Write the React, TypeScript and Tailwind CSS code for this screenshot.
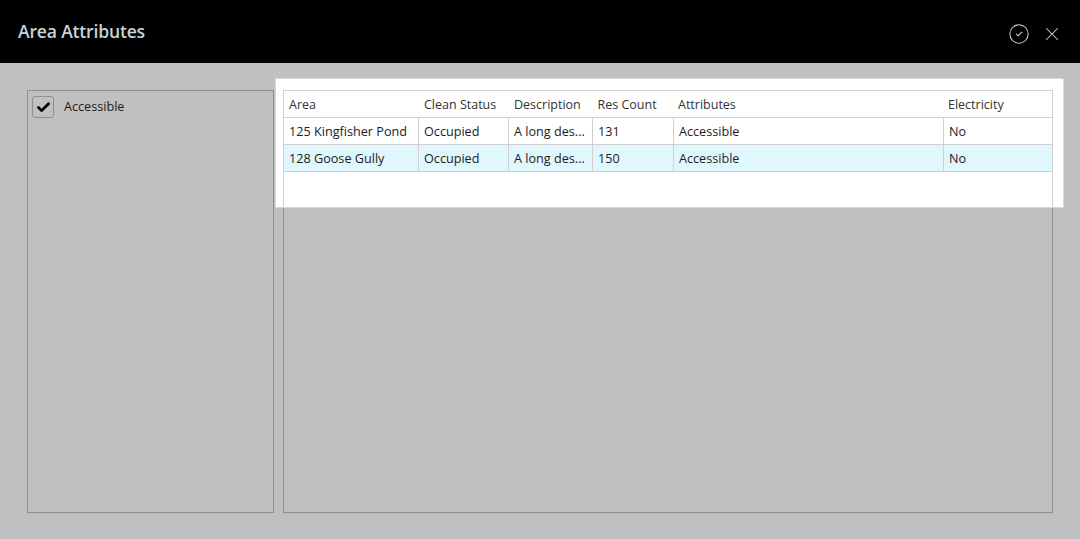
import { Check, CircleCheck, X } from "lucide-react";

const columns = [
  { label: "Area", width: "w-[135px]", headWidth: "w-[135px]" },
  { label: "Clean Status", width: "w-[90px]", headWidth: "w-[90px]" },
  { label: "Description", width: "w-[84px]", headWidth: "w-[83.5px]" },
  { label: "Res Count", width: "w-[81px]", headWidth: "w-[80.5px]" },
  { label: "Attributes", width: "w-[270px]", headWidth: "w-[270px]" },
  { label: "Electricity", width: "flex-1", headWidth: "flex-1" },
];

const rows = [
  { cells: ["125 Kingfisher Pond", "Occupied", "A long des...", "131", "Accessible", "No"], selected: false },
  { cells: ["128 Goose Gully", "Occupied", "A long des...", "150", "Accessible", "No"], selected: true },
];

export default function App() {
  return (
    <div className="flex h-[539px] w-[1080px] flex-col overflow-hidden bg-[#c0c0c0] font-['Open_Sans',sans-serif] text-[12.65px] text-[#1c1c1c]">
      {/* Header */}
      <header className="flex h-[63px] shrink-0 items-center justify-between bg-black pl-[18px] pr-[17px]">
        <h1 className="text-[17.6px] font-semibold tracking-[-0.2px] text-[#c9d3da]">Area Attributes</h1>
        <div className="mt-[5px] flex items-center gap-[11px] text-[#c5d8e6]">
          <CircleCheck className="h-[22px] w-[22px]" strokeWidth={1.1} />
          <X className="h-[22px] w-[22px]" strokeWidth={1.1} />
        </div>
      </header>

      <main className="flex flex-1 gap-[9px] pb-[26px] pl-[27px] pr-[27px] pt-[27px]">
        {/* Attribute list */}
        <aside className="w-[247px] shrink-0 border border-[#8f8f8f] px-1 py-[5px]">
          <label className="flex items-center gap-[10px]">
            <span className="flex h-[22px] w-[22px] items-center justify-center rounded-[3px] border border-[#8f8f8f] pt-px">
              <Check className="h-[15px] w-[15px] text-black" strokeWidth={4.5} />
            </span>
            <span className="mb-[2px]">Accessible</span>
          </label>
        </aside>

        {/* Grid panel */}
        <section className="relative flex-1 border border-[#8f8f8f]">
          <div className="absolute left-[-9px] top-[-13px] h-[130px] w-[789px] border border-[#d8d8d8] bg-white pl-[7px] pr-[10px] pt-[11px]">
            <div className="h-[117px] border-x border-t border-[#d0d0d0]">
              <div className="flex h-[27px] items-center border-b border-[#d0d0d0] pt-[2px] font-medium text-[#333333]">
                {columns.map((col) => (
                  <div key={col.label} className={`${col.headWidth} shrink-0 truncate pl-[5px] text-[12.5px]`}>
                    {col.label}
                  </div>
                ))}
              </div>
              {rows.map((row) => (
                <div
                  key={row.cells[0]}
                  className={`flex h-[27px] border-b border-[#d0d0d0] ${row.selected ? "bg-[#e0f7fe]" : "bg-white"}`}
                >
                  {row.cells.map((cell, i) => (
                    <div
                      key={i}
                      className={`${columns[i].width} flex shrink-0 items-center truncate border-[#d0d0d0] pl-[5px] ${i < 5 ? "border-r" : ""}`}
                    >
                      {cell}
                    </div>
                  ))}
                </div>
              ))}
            </div>
          </div>
        </section>
      </main>
    </div>
  );
}
